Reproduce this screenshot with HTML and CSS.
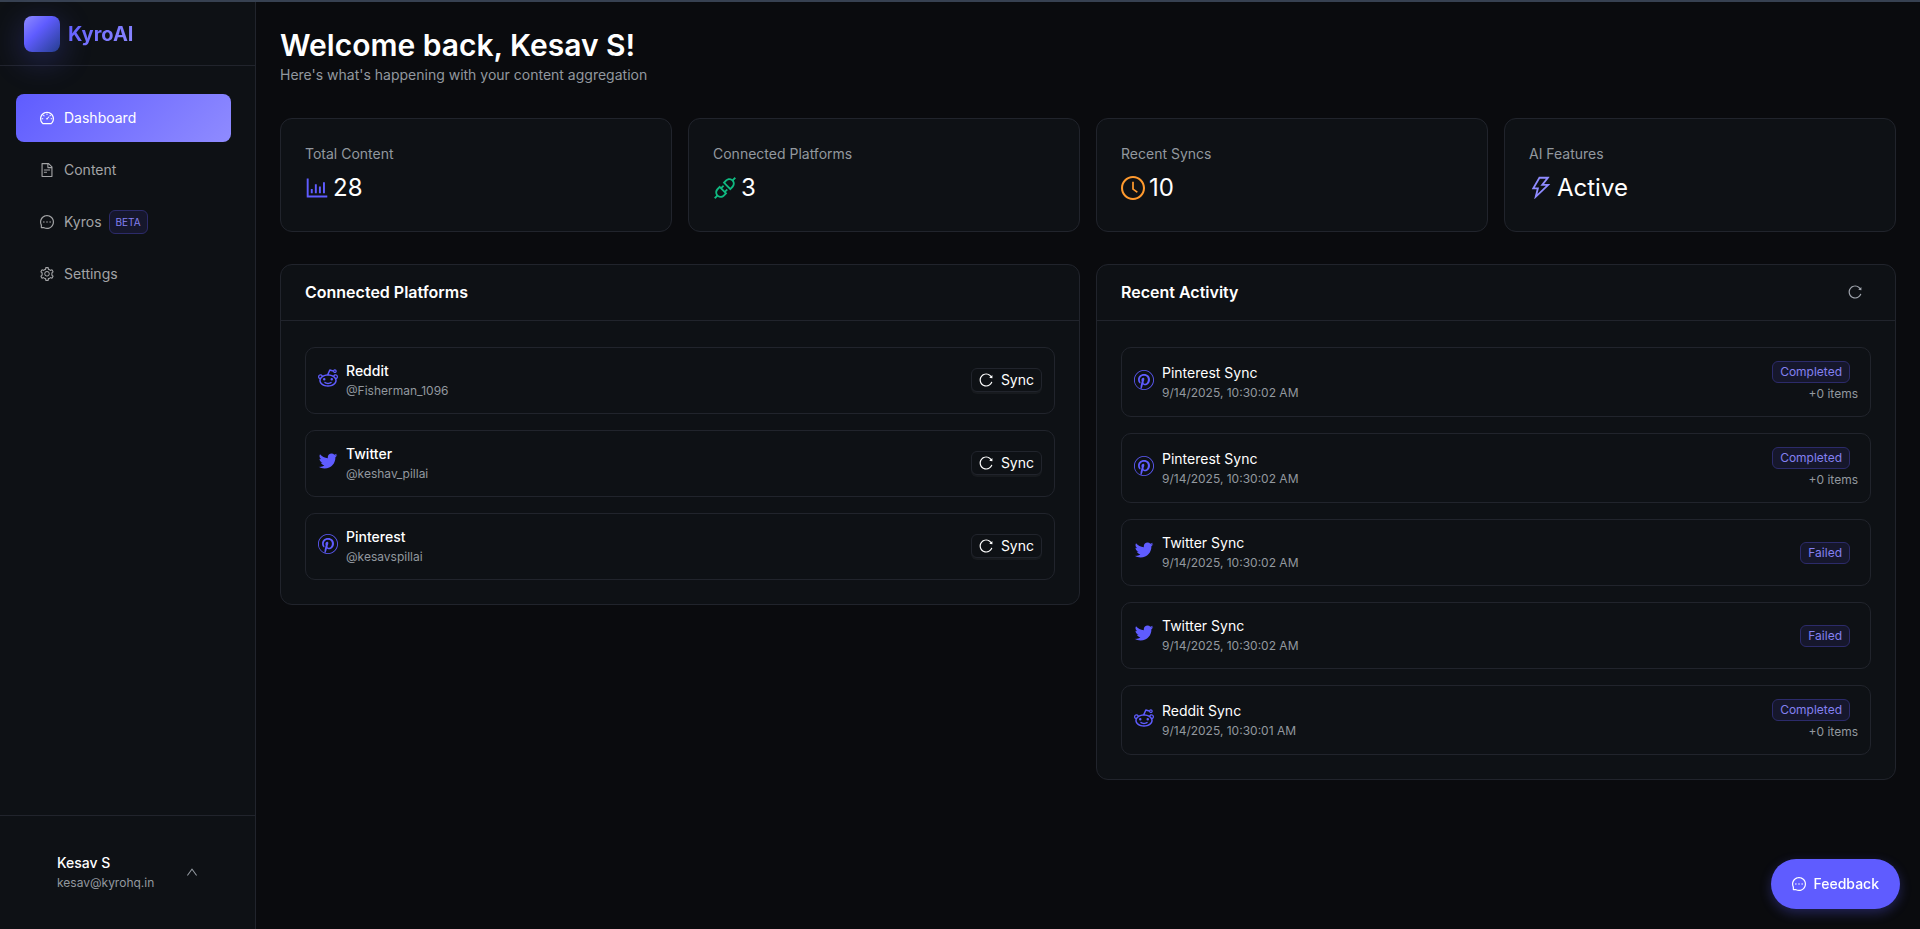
FILE: index.html
```html
<!DOCTYPE html>
<html lang="en">

<head>
    <meta charset="UTF-8">
    <meta name="viewport" content="width=device-width, initial-scale=1.0">
    <title>KyroAI - Dashboard</title>
    <link rel="stylesheet" href="styles.css">
</head>

<body>
    <!-- Icon set -->
    <svg class="icon-defs" aria-hidden="true">
        <symbol id="i-dashboard" viewBox="64 64 896 896"><path d="M924.8 385.6a446.7 446.7 0 00-96-142.4 446.7 446.7 0 00-142.4-96C631.1 123.8 572.5 112 512 112s-119.1 11.8-174.4 35.2a446.7 446.7 0 00-142.4 96 446.7 446.7 0 00-96 142.4C75.8 440.9 64 499.5 64 560c0 132.7 58.3 257.7 159.9 343.1l1.7 1.4c5.8 4.8 13.1 7.5 20.6 7.5h531.7c7.5 0 14.8-2.7 20.6-7.5l1.7-1.4C901.7 817.7 960 692.7 960 560c0-60.5-11.9-119.1-35.2-174.4zM761.4 836H262.6A371.12 371.12 0 01140 560c0-99.4 38.7-192.8 109-263 70.3-70.3 163.7-109 263-109 99.4 0 192.8 38.7 263 109 70.3 70.3 109 163.7 109 263 0 105.6-44.5 205.5-122.6 276zM623.5 421.5a8.03 8.03 0 00-11.3 0L527.7 506c-18.7-5-39.4-.2-54.1 14.5a55.95 55.95 0 000 79.2 55.95 55.95 0 0079.2 0 55.87 55.87 0 0014.5-54.1l84.5-84.5c3.1-3.1 3.1-8.2 0-11.3l-28.3-28.3zM490 320h44c4.4 0 8-3.6 8-8v-80c0-4.4-3.6-8-8-8h-44c-4.4 0-8 3.6-8 8v80c0 4.4 3.6 8 8 8zm260 218v44c0 4.4 3.6 8 8 8h80c4.4 0 8-3.6 8-8v-44c0-4.4-3.6-8-8-8h-80c-4.4 0-8 3.6-8 8zm12.7-197.2l-31.1-31.1a8.03 8.03 0 00-11.3 0l-56.6 56.6a8.03 8.03 0 000 11.3l31.1 31.1c3.1 3.1 8.2 3.1 11.3 0l56.6-56.6c3.1-3.1 3.1-8.2 0-11.3zm-458.6-31.1a8.03 8.03 0 00-11.3 0l-31.1 31.1a8.03 8.03 0 000 11.3l56.6 56.6c3.1 3.1 8.2 3.1 11.3 0l31.1-31.1c3.1-3.1 3.1-8.2 0-11.3l-56.6-56.6zM262 530h-80c-4.4 0-8 3.6-8 8v44c0 4.4 3.6 8 8 8h80c4.4 0 8-3.6 8-8v-44c0-4.4-3.6-8-8-8z"/></symbol>
        <symbol id="i-file" viewBox="64 64 896 896"><path d="M854.6 288.6L639.4 73.4c-6-6-14.1-9.4-22.6-9.4H192c-17.7 0-32 14.3-32 32v832c0 17.7 14.3 32 32 32h640c17.7 0 32-14.3 32-32V311.3c0-8.5-3.4-16.7-9.4-22.7zM790.2 326H602V137.8L790.2 326zm1.8 562H232V136h302v216a42 42 0 0042 42h216v494zM504 618H320c-4.4 0-8 3.6-8 8v48c0 4.4 3.6 8 8 8h184c4.4 0 8-3.6 8-8v-48c0-4.4-3.6-8-8-8zM312 490v48c0 4.4 3.6 8 8 8h384c4.4 0 8-3.6 8-8v-48c0-4.4-3.6-8-8-8H320c-4.4 0-8 3.6-8 8z"/></symbol>
        <symbol id="i-message" viewBox="64 64 896 896"><path d="M464 512a48 48 0 1096 0 48 48 0 10-96 0zm200 0a48 48 0 1096 0 48 48 0 10-96 0zm-400 0a48 48 0 1096 0 48 48 0 10-96 0zm661.2-173.6c-22.6-53.7-55-101.9-96.3-143.3a444.35 444.35 0 00-143.3-96.3C630.6 75.7 572.2 64 512 64h-2c-60.6.3-119.3 12.3-174.5 35.9a445.35 445.35 0 00-142 96.5c-40.9 41.3-73 89.3-95.2 142.8-23 55.4-34.6 114.3-34.3 174.9A449.4 449.4 0 00112 714v152a46 46 0 0046 46h152.1A449.4 449.4 0 00510 960h2.1c59.9 0 118-11.6 172.7-34.3a444.48 444.48 0 00142.8-95.2c41.3-40.9 73.8-88.7 96.5-142 23.6-55.2 35.6-113.9 35.9-174.5.3-60.9-11.5-120-34.8-175.6zm-151.1 438C704 845.8 611 884 512 884h-1.7c-60.3-.3-120.2-15.3-173.1-43.5l-8.4-4.5H188V695.2l-4.5-8.4C155.3 633.9 140.3 574 140 513.7c-.4-99.7 37.7-193.3 107.6-263.8 69.8-70.5 163.1-109.5 262.8-109.9h1.7c50 0 98.5 9.7 144.2 28.9 44.6 18.7 84.6 45.6 119 80 34.3 34.3 61.3 74.4 80 119 19.4 46.2 29.1 95.2 28.9 145.8-.6 99.6-39.7 192.9-110.1 262.7z"/></symbol>
        <symbol id="i-setting" viewBox="64 64 896 896"><path d="M924.8 625.7l-65.5-56c3.1-19 4.7-38.4 4.7-57.8s-1.6-38.8-4.7-57.8l65.5-56a32.03 32.03 0 009.3-35.2l-.9-2.6a443.74 443.74 0 00-79.7-137.9l-1.8-2.1a32.12 32.12 0 00-35.1-9.5l-81.3 28.9c-30-24.6-63.5-44-99.7-57.6l-15.7-85a32.05 32.05 0 00-25.8-25.7l-2.7-.5c-52.1-9.4-106.9-9.4-159 0l-2.7.5a32.05 32.05 0 00-25.8 25.7l-15.8 85.4a351.86 351.86 0 00-99 57.4l-81.9-29.1a32 32 0 00-35.1 9.5l-1.8 2.1a446.02 446.02 0 00-79.7 137.9l-.9 2.6c-4.5 12.5-.8 26.5 9.3 35.2l66.3 56.6c-3.1 18.8-4.6 38-4.6 57.1 0 19.2 1.5 38.4 4.6 57.1L99 625.5a32.03 32.03 0 00-9.3 35.2l.9 2.6c18.1 50.4 44.9 96.9 79.7 137.9l1.8 2.1a32.12 32.12 0 0035.1 9.5l81.9-29.1c29.8 24.5 63.1 43.9 99 57.4l15.8 85.4a32.05 32.05 0 0025.8 25.7l2.7.5a449.4 449.4 0 00159 0l2.7-.5a32.05 32.05 0 0025.8-25.7l15.7-85a350 350 0 0099.7-57.6l81.3 28.9a32 32 0 0035.1-9.5l1.8-2.1c34.8-41.1 61.6-87.5 79.7-137.9l.9-2.6c4.5-12.3.8-26.3-9.3-35zM788.3 465.9c2.5 15.1 3.8 30.6 3.8 46.1s-1.3 31-3.8 46.1l-6.6 40.1 74.7 63.9a370.03 370.03 0 01-42.6 73.6L721 702.8l-31.4 25.8c-23.9 19.6-50.5 35-79.3 45.8l-38.1 14.3-17.9 97a377.5 377.5 0 01-85 0l-17.9-97.2-37.8-14.5c-28.5-10.8-55-26.2-78.7-45.7l-31.4-25.9-93.4 33.2c-17-22.9-31.2-47.6-42.6-73.6l75.5-64.5-6.5-40c-2.4-14.9-3.7-30.3-3.7-45.5 0-15.3 1.2-30.6 3.7-45.5l6.5-40-75.5-64.5c11.3-26.1 25.6-50.7 42.6-73.6l93.4 33.2 31.4-25.9c23.7-19.5 50.2-34.9 78.7-45.7l37.9-14.3 17.9-97.2c28.1-3.2 56.8-3.2 85 0l17.9 97 38.1 14.3c28.7 10.8 55.4 26.2 79.3 45.8l31.4 25.8 92.8-32.9c17 22.9 31.2 47.6 42.6 73.6L781.8 426l6.5 39.9zM512 326c-97.2 0-176 78.8-176 176s78.8 176 176 176 176-78.8 176-176-78.8-176-176-176zm79.2 255.2A111.6 111.6 0 01512 614c-29.9 0-58-11.7-79.2-32.8A111.6 111.6 0 01400 502c0-29.9 11.7-58 32.8-79.2C454 401.6 482.1 390 512 390c29.9 0 58 11.6 79.2 32.8A111.6 111.6 0 01624 502c0 29.9-11.7 58-32.8 79.2z"/></symbol>
        <symbol id="i-chart" viewBox="64 64 896 896"><path d="M888 792H200V168c0-4.4-3.6-8-8-8h-56c-4.4 0-8 3.6-8 8v688c0 4.4 3.6 8 8 8h752c4.4 0 8-3.6 8-8v-56c0-4.4-3.6-8-8-8zm-600-80h56c4.4 0 8-3.6 8-8V560c0-4.4-3.6-8-8-8h-56c-4.4 0-8 3.6-8 8v144c0 4.4 3.6 8 8 8zm152 0h56c4.4 0 8-3.6 8-8V384c0-4.4-3.6-8-8-8h-56c-4.4 0-8 3.6-8 8v320c0 4.4 3.6 8 8 8zm152 0h56c4.4 0 8-3.6 8-8V462c0-4.4-3.6-8-8-8h-56c-4.4 0-8 3.6-8 8v242c0 4.4 3.6 8 8 8zm152 0h56c4.4 0 8-3.6 8-8V304c0-4.4-3.6-8-8-8h-56c-4.4 0-8 3.6-8 8v400c0 4.4 3.6 8 8 8z"/></symbol>
        <symbol id="i-api" viewBox="64 64 896 896"><path d="M917.7 148.8l-42.4-42.4c-1.6-1.6-3.6-2.3-5.7-2.3s-4.1.8-5.7 2.3l-76.1 76.1a199.27 199.27 0 00-112.1-34.3c-51.2 0-102.4 19.5-141.5 58.6L432.3 308.7a8.03 8.03 0 000 11.3L704 591.7c1.6 1.6 3.6 2.3 5.7 2.3 2 0 4.1-.8 5.7-2.3l101.9-101.9c68.9-69 77-175.7 24.3-253.5l76.1-76.1c3.1-3.2 3.1-8.3 0-11.4zM769.1 441.7l-59.4 59.4-186.8-186.8 59.4-59.4c24.9-24.9 58.1-38.7 93.4-38.7 35.3 0 68.4 13.7 93.4 38.7 24.9 24.9 38.7 58.1 38.7 93.4 0 35.3-13.8 68.4-38.7 93.4zm-190.2 105a8.03 8.03 0 00-11.3 0L501 613.3 410.7 523l66.7-66.7c3.1-3.1 3.1-8.2 0-11.3L441 408.6a8.03 8.03 0 00-11.3 0L363 475.3l-43-43a7.85 7.85 0 00-5.7-2.3c-2 0-4.1.8-5.7 2.3L206.8 534.2c-68.9 69-77 175.7-24.3 253.5l-76.1 76.1a8.03 8.03 0 000 11.3l42.4 42.4c1.6 1.6 3.6 2.3 5.7 2.3s4.1-.8 5.7-2.3l76.1-76.1c33.7 22.9 72.9 34.3 112.1 34.3 51.2 0 102.4-19.5 141.5-58.6l101.9-101.9c3.1-3.1 3.1-8.2 0-11.3l-43-43 66.7-66.7c3.1-3.1 3.1-8.2 0-11.3l-36.6-36.2zM441.7 769.1a131.32 131.32 0 01-93.4 38.7c-35.3 0-68.4-13.7-93.4-38.7a131.32 131.32 0 01-38.7-93.4c0-35.3 13.7-68.4 38.7-93.4l59.4-59.4 186.8 186.8-59.4 59.4z"/></symbol>
        <symbol id="i-clock" viewBox="64 64 896 896"><path d="M512 64C264.6 64 64 264.6 64 512s200.6 448 448 448 448-200.6 448-448S759.4 64 512 64zm0 820c-205.4 0-372-166.6-372-372s166.6-372 372-372 372 166.6 372 372-166.6 372-372 372z"/><path d="M686.7 638.6L544.1 535.5V288c0-4.4-3.6-8-8-8H488c-4.4 0-8 3.6-8 8v275.4c0 2.6 1.2 5 3.3 6.5l165.4 120.6c3.6 2.6 8.6 1.8 11.2-1.7l28.6-39c2.6-3.7 1.8-8.7-1.8-11.2z"/></symbol>
        <symbol id="i-bolt" viewBox="64 64 896 896"><path d="M848 359.3H627.7L825.8 109c4.1-5.3.4-13-6.3-13H436c-2.8 0-5.5 1.5-6.9 4L170 547.5c-3.1 5.3.7 12 6.9 12h174.4l-89.4 357.6c-1.9 7.8 7.5 13.3 13.3 7.7L853.5 373c5.2-4.9 1.7-13.7-5.5-13.7zM378.2 732.5l60.3-241H281.1l189.6-327.4h224.6L487 427.4h211L378.2 732.5z"/></symbol>
        <symbol id="i-reload" viewBox="64 64 896 896"><path d="M909.1 209.3l-56.4 44.1C775.8 155.1 656.2 92 521.9 92 290 92 102.3 279.5 102 511.5 101.7 743.7 289.8 932 521.9 932c181.3 0 335.8-115 394.6-276.1 1.5-4.2-.7-8.9-4.9-10.3l-56.7-19.5a8 8 0 00-10.1 4.8c-1.8 5-3.8 10-5.9 14.9-17.3 41-42.1 77.8-73.7 109.4A344.77 344.77 0 01655.9 829c-42.3 17.9-87.4 27-133.8 27-46.5 0-91.5-9.1-133.8-27A341.5 341.5 0 01279 755.2a342.16 342.16 0 01-73.7-109.4c-17.9-42.4-27-87.4-27-133.9s9.1-91.5 27-133.9c17.3-41 42.1-77.8 73.7-109.4 31.6-31.6 68.4-56.4 109.3-73.8 42.3-17.9 87.4-27 133.8-27 46.5 0 91.5 9.1 133.8 27a341.5 341.5 0 01109.3 73.8c9.9 9.9 19.2 20.4 27.8 31.4l-60.2 47a8 8 0 003 14.1l175.6 43c5 1.2 9.9-2.6 9.9-7.7l.8-180.9c-.1-6.6-7.8-10.3-13-6.2z"/></symbol>
        <symbol id="i-up" viewBox="64 64 896 896"><path d="M890.5 755.3L537.9 269.2c-12.8-17.6-39-17.6-51.7 0L133.5 755.3A8 8 0 00140 768h75c5.1 0 9.9-2.5 12.9-6.6L512 369.8l284.1 391.6c3 4.1 7.8 6.6 12.9 6.6h75c6.5 0 10.3-7.4 6.5-12.7z"/></symbol>
        <symbol id="i-twitter" viewBox="64 64 896 896"><path d="M928 254.3c-30.6 13.2-63.9 22.7-98.2 26.4a170.1 170.1 0 0075-94 336.64 336.64 0 01-108.2 41.2A170.1 170.1 0 00672 174c-94.5 0-170.5 76.6-170.5 170.6 0 13.2 1.6 26.4 4.2 39.1-141.5-7.4-267.7-75-351.6-178.5a169.32 169.32 0 00-23.2 86.1c0 59.2 30.1 111.4 76 142.1a172 172 0 01-77.1-21.7v2.1c0 82.9 58.6 151.6 136.7 167.4a180.6 180.6 0 01-44.9 5.8c-11.1 0-21.6-1.1-32.2-2.6C211 652 273.9 701.1 348.8 702.7c-58.6 45.9-132 72.9-211.7 72.9-14.3 0-27.5-.5-41.2-2.1C171.5 822 261.2 850 357.8 850 671.4 850 843 590.2 843 364.7c0-7.4 0-14.8-.5-22.2 33.2-24.3 62.3-54.4 85.5-88.2z"/></symbol>
        <symbol id="i-reddit" viewBox="64 64 896 896"><path d="M288 568a56 56 0 10112 0 56 56 0 10-112 0zm338.7 119.7c-23.1 18.2-68.9 37.8-114.7 37.8s-91.6-19.6-114.7-37.8c-14.4-11.3-35.3-8.9-46.7 5.5s-8.9 35.3 5.5 46.7C396.3 771.6 457.5 792 512 792s115.7-20.4 155.9-52.1a33.25 33.25 0 10-41.2-52.2zM960 456c0-61.9-50.1-112-112-112-42.1 0-78.7 23.2-97.9 57.6-57.6-31.5-127.7-51.8-204.1-56.5L612.9 195l127.9 36.9c11.5 32.6 42.6 56.1 79.2 56.1 46.4 0 84-37.6 84-84s-37.6-84-84-84c-32 0-59.8 17.9-74 44.2L603.5 123a33.2 33.2 0 00-39.6 18.4l-90.8 203.9c-74.5 5.2-142.9 25.4-199.2 56.2A111.94 111.94 0 00176 344c-61.9 0-112 50.1-112 112 0 45.8 27.5 85.1 66.8 102.5-7.1 21-10.8 43-10.8 65.5 0 154.6 175.5 280 392 280s392-125.4 392-280c0-22.6-3.8-44.5-10.8-65.5C932.5 541.1 960 501.8 960 456zM820 172.5a31.5 31.5 0 110 63 31.5 31.5 0 010-63zM120 456c0-30.9 25.1-56 56-56a56 56 0 0150.6 32.1c-29.3 22.2-53.5 47.8-71.5 75.9a56.23 56.23 0 01-35.1-52zm392 381.5c-179.8 0-325.5-95.6-325.5-213.5S332.2 410.5 512 410.5 837.5 506.1 837.5 624 691.8 837.5 512 837.5zM868.8 508c-17.9-28.1-42.2-53.7-71.5-75.9 9-18.9 28.3-32.1 50.6-32.1 30.9 0 56 25.1 56 56 .1 23.5-14.5 43.7-35.1 52zM624 568a56 56 0 10112 0 56 56 0 10-112 0z"/></symbol>
        <symbol id="i-pinterest" viewBox="64 64 896 896"><path d="M512 64C264.8 64 64 264.8 64 512s200.8 448 448 448 448-200.8 448-448S759.2 64 512 64zm0 38.96c226.14 0 409.04 182.9 409.04 409.04 0 226.14-182.9 409.04-409.04 409.04-41.37 0-81.27-6.19-118.89-17.57 16.76-28.02 38.4-68.06 46.99-101.12 5.1-19.82 26.2-100.24 26.2-100.24 13.73 26.13 53.7 48.39 96.2 48.39 126.66 0 217.96-116.34 217.96-261.02 0-138.63-113.13-242.29-258.65-242.29-181.1 0-277.29 121.54-277.29 253.96 0 61.53 32.76 138.29 85.21 162.63 7.95 3.76 12.1 2.08 14-5.68 1.36-5.94 8.43-34.16 11.68-47.38 1.02-4.19.51-7.79-2.9-11.9-17.24-21.16-31.2-59.83-31.2-96 0-92.75 70.18-182.5 190.03-182.5 103.27 0 175.63 70.24 175.63 170.94 0 113.75-57.49 192.47-132.27 192.47-41.27 0-72.22-34.16-62.27-76.07 11.85-50.02 34.8-104 34.8-140.02 0-32.3-17.32-59.24-53.19-59.24-42.23 0-76.12 43.69-76.12 102.15 0 37.26 12.63 62.48 12.63 62.48s-41.74 176.36-49.38 209.22c-8.4 36.5-5.07 87.81-1.47 121.26A409.17 409.17 0 01102.96 512c0-226.14 182.9-409.04 409.04-409.04z"/></symbol>
    </svg>

    <div class="top-line"></div>

    <div class="layout">
        <aside class="sidebar">
            <div class="brand">
                <div class="brand-logo"></div>
                <span class="brand-name">KyroAI</span>
            </div>

            <nav class="menu">
                <a class="menu-item active" href="#"><svg class="icon"><use href="#i-dashboard"/></svg>Dashboard</a>
                <a class="menu-item" href="#"><svg class="icon"><use href="#i-file"/></svg>Content</a>
                <a class="menu-item" href="#"><svg class="icon"><use href="#i-message"/></svg>Kyros<span class="beta">BETA</span></a>
                <a class="menu-item" href="#"><svg class="icon"><use href="#i-setting"/></svg>Settings</a>
            </nav>

            <div class="user-area">
                <button type="button" class="user">
                    <span>
                        <span class="user-name">Kesav S</span>
                        <span class="user-email">kesav@kyrohq.in</span>
                    </span>
                    <svg class="icon"><use href="#i-up"/></svg>
                </button>
            </div>
        </aside>

        <main class="content">
            <h1>Welcome back, Kesav S!</h1>
            <p class="subtitle">Here's what's happening with your content aggregation</p>

            <section class="stats">
                <div class="card stat">
                    <div class="stat-title">Total Content</div>
                    <div class="stat-value"><svg class="icon blue"><use href="#i-chart"/></svg>28</div>
                </div>
                <div class="card stat">
                    <div class="stat-title">Connected Platforms</div>
                    <div class="stat-value"><svg class="icon green"><use href="#i-api"/></svg>3</div>
                </div>
                <div class="card stat">
                    <div class="stat-title">Recent Syncs</div>
                    <div class="stat-value"><svg class="icon orange"><use href="#i-clock"/></svg>10</div>
                </div>
                <div class="card stat">
                    <div class="stat-title">AI Features</div>
                    <div class="stat-value"><svg class="icon violet"><use href="#i-bolt"/></svg>Active</div>
                </div>
            </section>

            <div class="panels">
                <section class="card">
                    <div class="card-head">
                        <h2>Connected Platforms</h2>
                    </div>
                    <ul class="list platforms">
                        <li class="list-item">
                            <div class="meta">
                                <svg class="avatar"><use href="#i-reddit"/></svg>
                                <div>
                                    <div class="meta-title">Reddit</div>
                                    <div class="meta-desc">@Fisherman_1096</div>
                                </div>
                            </div>
                            <button type="button" class="sync-btn"><svg class="icon"><use href="#i-reload"/></svg>Sync</button>
                        </li>
                        <li class="list-item">
                            <div class="meta">
                                <svg class="avatar"><use href="#i-twitter"/></svg>
                                <div>
                                    <div class="meta-title">Twitter</div>
                                    <div class="meta-desc">@keshav_pillai</div>
                                </div>
                            </div>
                            <button type="button" class="sync-btn"><svg class="icon"><use href="#i-reload"/></svg>Sync</button>
                        </li>
                        <li class="list-item">
                            <div class="meta">
                                <svg class="avatar"><use href="#i-pinterest"/></svg>
                                <div>
                                    <div class="meta-title">Pinterest</div>
                                    <div class="meta-desc">@kesavspillai</div>
                                </div>
                            </div>
                            <button type="button" class="sync-btn"><svg class="icon"><use href="#i-reload"/></svg>Sync</button>
                        </li>
                    </ul>
                </section>

                <section class="card">
                    <div class="card-head">
                        <h2>Recent Activity</h2>
                        <button type="button" class="refresh-btn" aria-label="Refresh"><svg class="icon"><use href="#i-reload"/></svg></button>
                    </div>
                    <ul class="list">
                        <li class="list-item">
                            <div class="meta">
                                <svg class="avatar"><use href="#i-pinterest"/></svg>
                                <div>
                                    <div class="meta-title">Pinterest Sync</div>
                                    <div class="meta-desc">9/14/2025, 10:30:02 AM</div>
                                </div>
                            </div>
                            <div class="status">
                                <span class="tag">Completed</span>
                                <span class="count">+0 items</span>
                            </div>
                        </li>
                        <li class="list-item">
                            <div class="meta">
                                <svg class="avatar"><use href="#i-pinterest"/></svg>
                                <div>
                                    <div class="meta-title">Pinterest Sync</div>
                                    <div class="meta-desc">9/14/2025, 10:30:02 AM</div>
                                </div>
                            </div>
                            <div class="status">
                                <span class="tag">Completed</span>
                                <span class="count">+0 items</span>
                            </div>
                        </li>
                        <li class="list-item">
                            <div class="meta">
                                <svg class="avatar"><use href="#i-twitter"/></svg>
                                <div>
                                    <div class="meta-title">Twitter Sync</div>
                                    <div class="meta-desc">9/14/2025, 10:30:02 AM</div>
                                </div>
                            </div>
                            <div class="status">
                                <span class="tag">Failed</span>
                            </div>
                        </li>
                        <li class="list-item">
                            <div class="meta">
                                <svg class="avatar"><use href="#i-twitter"/></svg>
                                <div>
                                    <div class="meta-title">Twitter Sync</div>
                                    <div class="meta-desc">9/14/2025, 10:30:02 AM</div>
                                </div>
                            </div>
                            <div class="status">
                                <span class="tag">Failed</span>
                            </div>
                        </li>
                        <li class="list-item">
                            <div class="meta">
                                <svg class="avatar"><use href="#i-reddit"/></svg>
                                <div>
                                    <div class="meta-title">Reddit Sync</div>
                                    <div class="meta-desc">9/14/2025, 10:30:01 AM</div>
                                </div>
                            </div>
                            <div class="status">
                                <span class="tag">Completed</span>
                                <span class="count">+0 items</span>
                            </div>
                        </li>
                    </ul>
                </section>
            </div>
        </main>
    </div>

    <button type="button" class="feedback-btn"><svg class="icon"><use href="#i-message"/></svg>Feedback</button>
</body>

</html>
```

FILE: styles.css
```css
* {
    box-sizing: border-box;
}

body {
    margin: 0;
    min-height: 100vh;
    display: flex;
    flex-direction: column;
    background-color: #0a0b0e;
    color: #fff;
    font-family: Inter, sans-serif;
    font-size: 14px;
    line-height: 22px;
}

button {
    font: inherit;
    color: inherit;
    cursor: pointer;
}

h1,
h2,
p,
ul {
    margin: 0;
    padding: 0;
}

.icon-defs {
    display: none;
}

.icon {
    width: 14px;
    height: 14px;
    flex: none;
    fill: currentColor;
}

.top-line {
    height: 2px;
    background-color: #374151;
}

.layout {
    flex: 1;
    display: flex;
}

/* Sidebar */
.sidebar {
    width: 256px;
    flex: none;
    display: flex;
    flex-direction: column;
    background-color: #0e1115;
    border-right: 1px solid #21242c;
}

.brand {
    height: 64px;
    display: flex;
    align-items: center;
    gap: 8px;
    padding: 0 24px;
    border-bottom: 1px solid #21242c;
}

.brand-logo {
    width: 36px;
    height: 36px;
    border-radius: 8px;
    background: linear-gradient(135deg, #8f8bff 0%, #5f5cff 40%, #253e8f 100%);
    box-shadow: 0 8px 32px rgba(94, 92, 255, 0.3);
}

.brand-name {
    font-size: 20px;
    font-weight: 700;
    line-height: 28px;
    background: linear-gradient(135deg, #5f5cff, #8f8bff);
    background-clip: text;
    -webkit-background-clip: text;
    color: transparent;
}

.menu {
    flex: 1;
    display: flex;
    flex-direction: column;
    gap: 4px;
    padding: 28px 24px 28px 16px;
}

.menu-item {
    height: 48px;
    display: flex;
    align-items: center;
    padding: 0 24px;
    border-radius: 8px;
    color: #a3a4a6;
    text-decoration: none;
}

.menu-item .icon {
    margin-right: 10px;
}

.menu-item.active {
    background: linear-gradient(135deg, #5f5cff, #8f8bff);
    color: #fff;
}

.beta {
    height: 24px;
    margin-left: 7px;
    padding: 0 6px;
    border: 1px solid #2c2b6a;
    border-radius: 6px;
    background-color: #16172c;
    color: #8480f0;
    font-size: 10px;
}

.user-area {
    border-top: 1px solid #21242c;
    padding: 24px 16px;
}

.user {
    width: 100%;
    display: flex;
    align-items: center;
    justify-content: space-between;
    padding: 12px 41px 13px;
    border: none;
    background: none;
    text-align: left;
}

.user-name,
.user-email {
    display: block;
}

.user-name {
    font-weight: 500;
}

.user-email {
    color: #92989f;
    font-size: 12px;
    line-height: 18px;
}

.user .icon {
    width: 12px;
    height: 12px;
    color: #92989f;
}

/* Content */
.content {
    flex: 1;
    padding: 24px;
}

h1 {
    font-size: 30px;
    font-weight: 600;
    line-height: 38px;
}

.subtitle {
    color: #92989f;
    margin-bottom: 32px;
}

.card {
    background-color: #0e1115;
    border: 1px solid #21242c;
    border-radius: 12px;
}

.stats {
    display: grid;
    grid-template-columns: repeat(4, 1fr);
    gap: 16px;
    margin-bottom: 32px;
}

.stat {
    padding: 24px;
}

.stat-title {
    color: #92989f;
    margin-bottom: 4px;
}

.stat-value {
    display: flex;
    align-items: center;
    gap: 4px;
    font-size: 24px;
    line-height: 38px;
}

.stat-value .icon {
    width: 24px;
    height: 24px;
}

.blue {
    color: #5f5cff;
}

.green {
    color: #10b981;
}

.orange {
    color: #ff9a2e;
}

.violet {
    color: #8f8bff;
}

.panels {
    display: grid;
    grid-template-columns: 1fr 1fr;
    gap: 16px;
    align-items: start;
}

.card-head {
    height: 56px;
    display: flex;
    align-items: center;
    justify-content: space-between;
    padding: 0 24px 1px;
    border-bottom: 1px solid #21242c;
}

h2 {
    font-size: 16px;
    font-weight: 600;
    line-height: 24px;
}

.refresh-btn {
    width: 32px;
    height: 32px;
    display: flex;
    align-items: center;
    justify-content: center;
    border: none;
    background: none;
    color: #a0a5ae;
}

.list {
    display: flex;
    flex-direction: column;
    gap: 16px;
    padding: 26px 24px 24px;
    list-style: none;
}

.list-item {
    display: flex;
    align-items: center;
    justify-content: space-between;
    padding: 12px 12px 13px;
    border: 1px solid #21242c;
    border-radius: 10px;
}

.meta {
    display: flex;
    align-items: flex-start;
    gap: 8px;
}

.avatar {
    width: 20px;
    height: 20px;
    flex: none;
    margin-top: 8px;
    fill: #5f5cff;
}

.platforms .meta-title {
    font-weight: 500;
}

.meta-desc,
.count {
    color: #92989f;
    font-size: 12px;
    line-height: 18px;
}

.sync-btn {
    height: 24px;
    display: flex;
    align-items: center;
    gap: 8px;
    padding: 0 7px;
    border: 1px solid #21242c;
    border-radius: 6px;
    background-color: #0e1115;
    box-shadow: 0 2px 0 rgba(255, 255, 255, 0.04);
}

.status {
    display: flex;
    flex-direction: column;
    align-items: flex-end;
    gap: 2px;
}

.tag {
    margin: 1px 8px 0 0;
    padding: 0 7px;
    border: 1px solid #2c2b6a;
    border-radius: 6px;
    background-color: #16172c;
    color: #8480f0;
    font-size: 12px;
    line-height: 20px;
}

.feedback-btn {
    position: fixed;
    right: 20px;
    bottom: 20px;
    height: 50px;
    display: flex;
    align-items: center;
    gap: 8px;
    padding: 0 21px;
    border: none;
    border-radius: 25px;
    background-color: #5f5cff;
    box-shadow: 0 4px 12px rgba(94, 92, 255, 0.3);
    font-weight: 500;
}
```
